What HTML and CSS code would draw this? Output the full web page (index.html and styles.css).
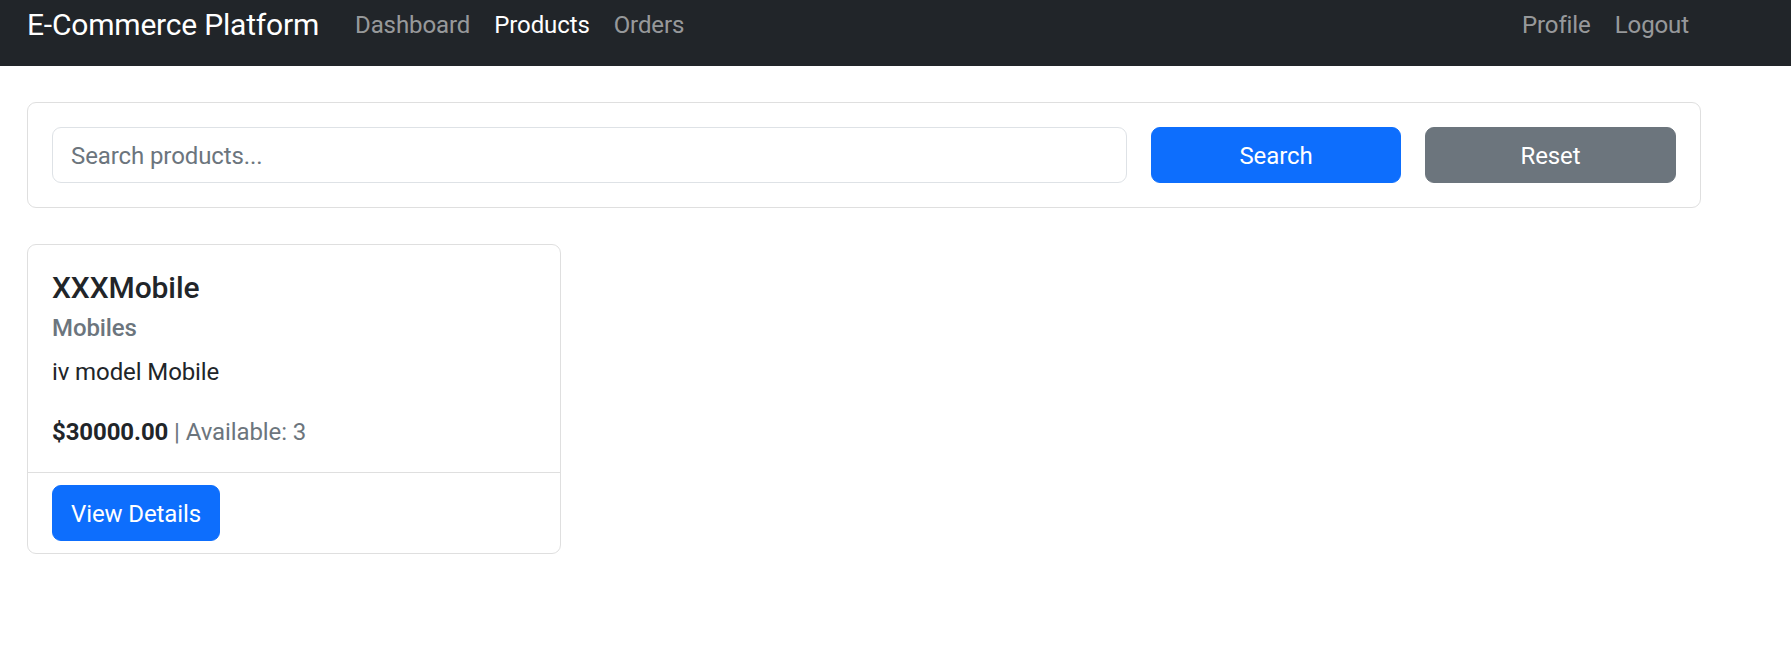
FILE: index.html
```html
<!DOCTYPE html>
<html lang="en">
<head>
<meta charset="utf-8">
<title>Products - E-Commerce Platform</title>
<link rel="stylesheet" href="styles.css">
</head>
<body>
<nav class="navbar">
  <div class="container nav-inner">
    <a class="brand" href="#">E-Commerce Platform</a>
    <ul class="nav-list">
      <li><a class="nav-link" href="#">Dashboard</a></li>
      <li><a class="nav-link active" href="#">Products</a></li>
      <li><a class="nav-link" href="#">Orders</a></li>
    </ul>
    <ul class="nav-list nav-right">
      <li><a class="nav-link" href="#">Profile</a></li>
      <li><a class="nav-link" href="#">Logout</a></li>
    </ul>
  </div>
</nav>

<main class="container">
  <section class="card search-card">
    <form class="search-row">
      <input class="form-control" type="text" placeholder="Search products...">
      <button class="btn btn-primary" type="button">Search</button>
      <button class="btn btn-secondary" type="button">Reset</button>
    </form>
  </section>

  <div class="products">
    <article class="card product-card">
      <div class="card-body">
        <h5 class="card-title">XXXMobile</h5>
        <h6 class="card-subtitle">Mobiles</h6>
        <p class="card-text">iv model Mobile</p>
        <p class="card-text last"><strong>$30000.00</strong> <span class="muted">| Available: 3</span></p>
      </div>
      <div class="card-footer">
        <a class="btn btn-primary btn-inline" href="#">View Details</a>
      </div>
    </article>
  </div>
</main>
</body>
</html>
```
FILE: styles.css
```css
* { box-sizing: border-box; }

body {
  margin: 0;
  font-family: Roboto, "Liberation Sans", sans-serif;
  font-size: 24px;
  line-height: 1.5;
  letter-spacing: -0.1px;
  color: #212529;
  background: #fff;
}

.container {
  width: 1710px;
  margin-left: 9px;
  padding: 0 18px;
}

/* Navbar */
.navbar {
  background: #212529;
  height: 66px;
}

.nav-inner {
  display: flex;
  align-items: flex-start;
}

.brand {
  font-size: 30px;
  line-height: 45px;
  padding-top: 2px;
  margin-right: 24px;
  letter-spacing: -0.2px;
  color: #fff;
  text-decoration: none;
}

.nav-list {
  display: flex;
  list-style: none;
  margin: 0;
  padding: 0;
}

.nav-right { margin-left: auto; }

.nav-link {
  display: block;
  font-size: 24px;
  line-height: 36px;
  padding: 7px 12px 0;
  color: rgba(255, 255, 255, 0.55);
  text-decoration: none;
}

.nav-link.active { color: #fff; }

/* Cards */
.card {
  border: 1px solid #dfdfdf;
  border-radius: 9px;
  background: #fff;
}

.search-card {
  margin-top: 36px;
  padding: 24px;
}

.search-row {
  display: grid;
  grid-template-columns: 1075px 250px 251px;
  column-gap: 24px;
  margin: 0;
}

.form-control {
  display: block;
  width: 100%;
  height: 56px;
  padding: 10px 18px 8px;
  font-family: inherit;
  font-size: 24px;
  line-height: 36px;
  letter-spacing: inherit;
  color: #212529;
  border: 1px solid #dee2e6;
  border-radius: 9px;
  background: #fff;
}

.form-control::placeholder { color: #6c757d; }

.btn {
  display: inline-block;
  height: 56px;
  padding: 10px 18px 8px;
  font-family: inherit;
  font-size: 24px;
  line-height: 36px;
  letter-spacing: inherit;
  color: #fff;
  text-align: center;
  text-decoration: none;
  border: 1px solid transparent;
  border-radius: 9px;
}

.btn-primary { background: #0d6efd; border-color: #0d6efd; }
.btn-secondary { background: #6c757d; border-color: #6c757d; }

.products {
  margin-top: 36px;
  display: flex;
}

.product-card { width: 534px; }

.card-body { padding: 25px 24px 22px; }

.card-title {
  margin: 0 0 13.5px;
  font-size: 30px;
  font-weight: 500;
  line-height: 1.2;
}

.card-subtitle {
  margin: -6px 0 12px;
  font-size: 24px;
  font-weight: 500;
  line-height: 1.2;
  color: #6c757d;
}

.card-text { margin: 0 0 24px; }
.card-text.last { margin-bottom: 0; }

.muted { color: #6c757d; }

.card-footer {
  border-top: 1px solid #dfdfdf;
  padding: 12px 24px;
}

.btn-inline { height: auto; }
```
